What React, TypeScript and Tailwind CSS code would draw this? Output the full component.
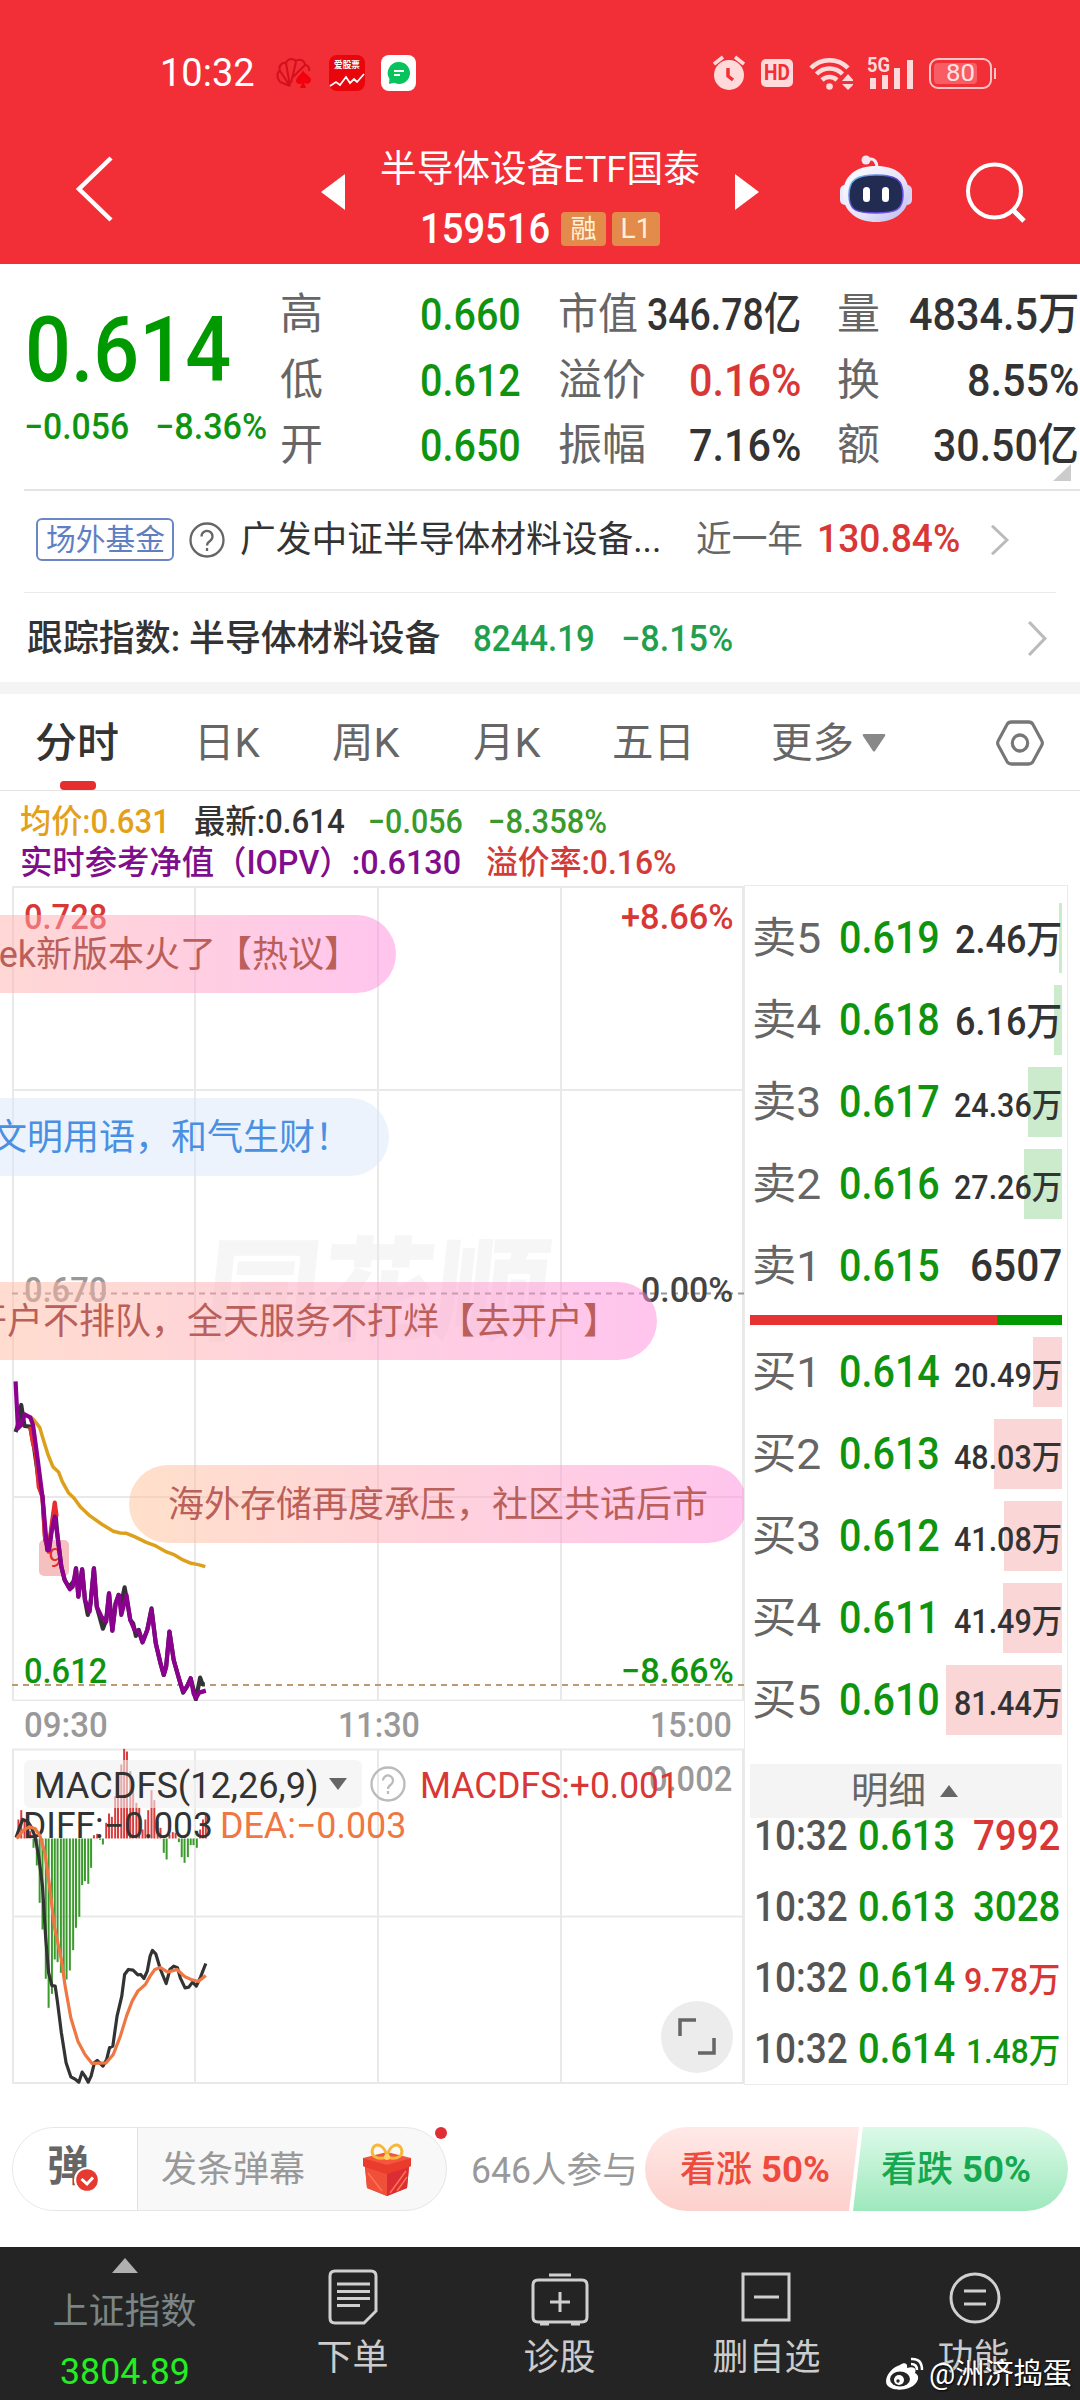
import { useLayoutEffect, useRef, useState } from "react";
import type { ReactNode } from "react";
import clsx from "clsx";

type FitProps = { w: number; className?: string; children: ReactNode };

// Condenses a run of text horizontally so that it fills exactly `w` pixels.
function Fit({ w, className, children }: FitProps) {
  const ref = useRef<HTMLSpanElement>(null);
  const [scale, setScale] = useState(1);

  useLayoutEffect(() => {
    if (ref.current && ref.current.offsetWidth > 0) setScale(w / ref.current.offsetWidth);
  }, [w, children]);

  return (
    <span className={clsx("inline-block shrink-0 leading-none", className)} style={{ width: w }}>
      <span ref={ref} className="inline-block origin-left whitespace-pre" style={{ transform: `scaleX(${scale})` }}>{children}</span>
    </span>
  );
}

type Level = { name: string; price: string; vol: string; volW: number; size: "lg" | "md" | "sm"; bar: number };

const SELLS: Level[] = [
  { name: "卖5", price: "0.619", vol: "2.46万", volW: 107, size: "md", bar: 3 },
  { name: "卖4", price: "0.618", vol: "6.16万", volW: 107, size: "md", bar: 8 },
  { name: "卖3", price: "0.617", vol: "24.36万", volW: 108, size: "sm", bar: 34 },
  { name: "卖2", price: "0.616", vol: "27.26万", volW: 108, size: "sm", bar: 38 },
  { name: "卖1", price: "0.615", vol: "6507", volW: 92, size: "lg", bar: 0 },
];

const BUYS: Level[] = [
  { name: "买1", price: "0.614", vol: "20.49万", volW: 108, size: "sm", bar: 29 },
  { name: "买2", price: "0.613", vol: "48.03万", volW: 108, size: "sm", bar: 68 },
  { name: "买3", price: "0.612", vol: "41.08万", volW: 108, size: "sm", bar: 58 },
  { name: "买4", price: "0.611", vol: "41.49万", volW: 108, size: "sm", bar: 59 },
  { name: "买5", price: "0.610", vol: "81.44万", volW: 108, size: "sm", bar: 116 },
];

const TICKS = [
  { price: "0.613", vol: "7992", w: 87, up: true, small: false },
  { price: "0.613", vol: "3028", w: 87, up: false, small: false },
  { price: "0.614", vol: "9.78万", w: 96, up: true, small: true },
  { price: "0.614", vol: "1.48万", w: 94, up: false, small: true },
];

const AVG_LINE = "64,200 72,210 84,232 92,270 102,315 112,350 124,366 132,395 145,428 157,445 170,470 190,497 215,522 240,544 255,549 268,550 285,560 310,577 330,588 350,604 370,615 385,628 405,640 420,644 435,650";
const IOPV_LINE = "33,94 38,235 45,225 52,193 64,202 70,225 80,330 90,440 100,600 104,600 110,540 116,500 122,560 130,650 137,690 148,718 154,710 161,655 166,740 174,658 180,750 190,785 199,655 205,770 215,800 225,815 231,730 238,842 245,760 252,735 257,795 268,735 276,810 285,840 294,845 302,877 312,840 321,780 330,880 340,940 347,975 352,950 359,845 368,930 380,990 388,1025 396,1010 404,985 410,1030 415,1045 422,1028 436,1022";
const PRICE_LINE = "33,246 38,225 45,165 52,228 64,230 72,290 84,410 90,440 96,570 103,600 116,470 122,560 130,650 137,690 146,712 158,690 161,655 166,740 174,658 180,750 186,795 192,760 199,655 205,770 218,836 225,810 231,730 238,842 245,760 251,735 257,760 264,712 270,760 276,810 282,820 288,858 294,840 302,877 312,840 321,775 330,880 340,940 347,975 352,950 359,845 368,930 380,990 388,1028 396,1010 404,985 415,1048 424,983 429,1003 434,1003";
const HOT_LINE = "64,230 70,280 76,310 82,410 90,440 95,560 103,605 109,530 116,458 120,500";

const DIFF_LINE = "34,294 42,262 48,240 58,245 66,262 74,290 82,350 90,440 97,600 103,700 110,738 117,740 122,790 130,880 140,970 150,1012 160,1020 167,1028 174,998 180,1010 187,1028 193,1010 200,970 206,963 218,980 226,960 232,925 239,920 248,830 258,770 264,705 272,690 282,692 292,706 298,705 305,717 312,695 318,650 323,633 330,643 340,690 352,732 360,690 368,680 376,685 382,715 392,745 400,743 408,728 416,740 425,712 436,672";
const DEA_LINE = "35,297 50,272 62,262 75,268 85,290 95,340 105,440 115,560 130,660 138,740 150,835 165,905 180,945 195,972 225,970 240,945 255,890 268,830 280,785 292,755 308,735 318,710 328,690 340,684 355,698 375,690 392,712 405,720 420,726 436,708";

// [x, y] pairs, every bar grows from the zero line at y = 297
const MACD_BARS: [number, number][] = [
  [39, 240], [45, 212], [52, 240], [58, 255], [64, 275], [71, 325], [78, 378], [84, 490], [90, 570], [97, 718],
  [103, 805], [110, 763], [116, 660], [122, 668], [129, 700], [135, 712], [141, 720], [148, 693], [155, 632], [161, 565],
  [168, 532], [174, 437], [180, 425], [187, 433], [193, 385], [199, 287], [206, 283], [212, 301], [218, 315], [225, 250],
  [231, 222], [237, 232], [244, 170], [250, 130], [257, 75], [263, 28], [269, 36], [276, 95], [282, 130], [289, 190],
  [295, 205], [302, 270], [308, 240], [314, 212], [321, 152], [327, 182], [334, 245], [340, 265], [347, 340], [353, 360],
  [359, 285], [366, 278], [372, 280], [379, 308], [385, 353], [391, 370], [398, 353], [404, 317], [410, 317], [417, 325],
  [424, 270], [430, 240], [436, 225],
];

function StatusBar() {
  return (
    <div className="mt-[45px] flex h-[56px] items-center pl-[160px] text-white">
      <Fit w={95} className="text-[38px]">10:32</Fit>
      <svg className="ml-[21px] h-[32px] w-[36px]" viewBox="0 0 36 32" fill="none" stroke="#d3101b" strokeWidth="2">
        <path d="M14 29 4 25C0 20 1 15 4 14 2 9 6 5 10 6c2-5 7-5 10-2 4-3 9 0 9 4 3 0 5 3 4 6M14 29 4 14M14 29 10 6M15 26 20 5M17 20 29 8" />
        <path d="M27 13c-1 4-7 7-7 11 0 3 4 4 6 2l-2 5h6l-2-5c3 2 7 0 7-3 0-4-7-6-8-10Z" fill="#f2000c" stroke="none" />
      </svg>
      <div className="ml-[17px] flex h-[36px] w-[36px] flex-col items-center rounded-[8px] bg-[#e8060c] pt-[6px]">
        <Fit w={26} className="text-[9px] font-bold">爱股票</Fit>
        <svg className="mt-[3px] h-[16px] w-[36px]" viewBox="0 0 36 16" fill="none" stroke="#fff" strokeWidth="1.8"><path d="m1 13 6-4 4 3 6-8 4 6 4-4 3 3 7-8" /></svg>
      </div>
      <div className="ml-[16px] flex h-[36px] w-[35px] items-center justify-center rounded-[8px] bg-white">
        <svg className="h-[24px] w-[24px]" viewBox="0 0 24 24"><path d="M12 1a11 11 0 1 1-5 20.800L2 23l.500-5A11 11 0 0 1 12 1Z" fill="#07c35c" /><path d="M7 10h10M7 14h6" stroke="#fff" strokeWidth="2" /></svg>
      </div>

      <svg className="ml-[297px] h-[36px] w-[32px]" viewBox="0 0 32 36" fill="none">
        <circle cx="16" cy="20" r="15" fill="#ffdadb" />
        <path d="m1 9 9-7M31 9l-9-7" stroke="#ffdadb" strokeWidth="3.500" />
        <path d="M15 13v8l5 4" stroke="#f22f37" strokeWidth="3.500" />
      </svg>
      <div className="ml-[16px] flex h-[28px] w-[32px] items-center justify-center rounded-[5px] bg-[#ffdadb] text-[#f22f37]"><Fit w={26} className="text-[22px] font-bold">HD</Fit></div>
      <svg className="ml-[16px] h-[36px] w-[44px]" viewBox="0 0 44 36" fill="none" stroke="#ffdadb" strokeWidth="4.500">
        <path d="M2 13a26 26 0 0 1 37 0M7.500 19a18 18 0 0 1 26 0M13 25a11 11 0 0 1 15 0" />
        <circle cx="20.500" cy="31.500" r="3.300" fill="#ffdadb" stroke="none" />
        <path d="m33 26 6-7 6 7ZM33 29l6 6 6-6Z" fill="#ffdadb" stroke="none" />
      </svg>
      <div className="relative ml-[14px] h-[34px] w-[46px] text-[#ffdadb]">
        <svg className="h-full w-full" viewBox="0 0 46 34" fill="#ffdadb"><path d="M3 22h6v11H3ZM15 19h6v14h-6ZM27 12h6v21h-6ZM40 4h6v29h-6Z" /></svg>
        <Fit w={23} className="absolute -top-[1px] left-0 text-[20px] font-bold">5G</Fit>
      </div>
      <div className="relative ml-[16px] flex h-[31px] w-[63px] items-center justify-center rounded-[9px] border-2 border-[#ffc4c6]">
        <div className="absolute top-[3px] left-[3px] h-[21px] w-[43px] rounded-[4px] bg-[#f75d63]" />
        <Fit w={29} className="relative text-[24px] text-[#ffe3e4]">80</Fit>
        <div className="absolute top-[8px] -right-[6px] h-[11px] w-[2px] bg-[#ffc4c6]" />
      </div>
    </div>
  );
}

function Robot() {
  return (
    <svg className="mt-[2px] ml-[79px] h-[68px] w-[76px]" viewBox="0 0 76 68">
      <defs>
        <linearGradient id="shell" x1="0" y1="0" x2="1" y2="1"><stop offset="0" stopColor="#fff" /><stop offset=".6" stopColor="#e4e2f8" /><stop offset="1" stopColor="#b9b8ee" /></linearGradient>
        <linearGradient id="rim" x1="0" y1="0" x2="1" y2="1"><stop offset="0" stopColor="#6fd6ee" /><stop offset=".5" stopColor="#5a3fd6" /><stop offset="1" stopColor="#7a5cf0" /></linearGradient>
      </defs>
      <path d="M29 5c7-3 10 2 10 8" fill="none" stroke="#efeafa" strokeWidth="3" />
      <circle cx="28" cy="5" r="4.500" fill="#f3e6f2" />
      <rect x="2" y="30" width="10" height="20" rx="5" fill="#ece9fb" /><rect x="64" y="30" width="10" height="20" rx="5" fill="#d5d2f3" />
      <path d="M38 11c20 0 33 10 33 28S56 67 38 67 5 57 5 39s13-28 33-28Z" fill="url(#shell)" />
      <path d="M38 20c20 0 27 5 27 20s-7 18-27 18-27-3-27-18 7-20 27-20Z" fill="#222c52" stroke="url(#rim)" strokeWidth="1.500" />
      <rect x="25" y="32" width="7" height="15" rx="3.500" fill="#fff" /><rect x="44" y="32" width="7" height="15" rx="3.500" fill="#fff" />
    </svg>
  );
}

function Header() {
  return (
    <header className="h-[264px] shrink-0 overflow-hidden bg-[#f22f37]">
      <StatusBar />
      <div className="mt-[22px] flex h-[130px] items-center text-white">
        <svg className="mt-[2px] ml-[74px] h-[68px] w-[40px]" viewBox="0 0 40 68" fill="none" stroke="#fff" strokeWidth="4.500"><path d="M37 3 5 34l32 31" /></svg>
        <svg className="mt-[8px] ml-[207px] h-[36px] w-[24px]" viewBox="0 0 24 36"><path d="M24 0v36L0 18Z" fill="#fff" /></svg>
        <div className="flex h-[130px] w-[390px] flex-col items-center pt-[21px]">
          <div className="flex h-[50px] items-center"><Fit w={320} className="text-[37px]">半导体设备ETF国泰</Fit></div>
          <div className="mt-[13px] flex h-[44px] items-center">
            <Fit w={130} className="text-[42px] font-medium">159516</Fit>
            <span className="ml-[11px] flex h-[34px] w-[45px] items-center justify-center rounded-[4px] bg-[#e28b4b] text-[26px] leading-none text-[#fff1d8]">融</span>
            <span className="ml-[6px] flex h-[34px] w-[48px] items-center justify-center rounded-[4px] bg-[#e28b4b] text-[28px] leading-none text-[#fff1d8]">L1</span>
          </div>
        </div>
        <svg className="mt-[8px] h-[36px] w-[24px]" viewBox="0 0 24 36"><path d="M0 0v36l24-18Z" fill="#fff" /></svg>
        <Robot />
        <svg className="mt-[7px] ml-[50px] h-[64px] w-[64px]" viewBox="0 0 64 64" fill="none" stroke="#fff" strokeWidth="4"><circle cx="30.500" cy="31" r="26.500" /><path d="m49 50 11 11" strokeWidth="5" /></svg>
      </div>
    </header>
  );
}

function Stat({ label, lw, value, vw, tone = "text-[#333]" }: { label: string; lw: number; value: string; vw: number; tone?: string }) {
  return (
    <div className="flex h-[65.5px] items-center justify-between">
      <Fit w={lw} className="text-[43px] text-[#666]">{label}</Fit>
      <Fit w={vw} className={clsx("text-[45px] font-medium", tone)}>{value}</Fit>
    </div>
  );
}

function Quote() {
  const green = "text-[#0f9410]";
  return (
    <section className="flex h-[225px] shrink-0 pt-[18px]">
      <div className="w-[280px] pt-[18px]">
        <div className="flex h-[100px] items-center pl-[25px]"><Fit w={206} className="text-[91px] font-medium text-[#009900]">0.614</Fit></div>
        <div className="mt-[7px] flex h-[40px] items-center pl-[24px] text-[#0f9410]">
          <Fit w={105} className="text-[36px] font-medium">−0.056</Fit>
          <Fit w={112} className="ml-[26px] text-[36px] font-medium">−8.36%</Fit>
        </div>
      </div>
      <div className="w-[241px]">
        <Stat label="高" lw={43} value="0.660" vw={101} tone={green} />
        <Stat label="低" lw={43} value="0.612" vw={101} tone={green} />
        <Stat label="开" lw={43} value="0.650" vw={101} tone={green} />
      </div>
      <div className="ml-[37px] w-[243px]">
        <Stat label="市值" lw={80} value="346.78亿" vw={154} />
        <Stat label="溢价" lw={88} value="0.16%" vw={112} tone="text-[#d93636]" />
        <Stat label="振幅" lw={88} value="7.16%" vw={112} />
      </div>
      <div className="relative ml-[36px] w-[242px]">
        <Stat label="量" lw={43} value="4834.5万" vw={170} />
        <Stat label="换" lw={43} value="8.55%" vw={112} />
        <Stat label="额" lw={43} value="30.50亿" vw={146} />
        <svg className="absolute right-[8px] bottom-[8px] h-[17px] w-[18px]" viewBox="0 0 18 17"><path d="M18 0v17H0Z" fill="#ccc" /></svg>
      </div>
    </section>
  );
}

function Chevron({ className }: { className: string }) {
  return <svg className={className} viewBox="0 0 20 36" preserveAspectRatio="none" fill="none" stroke="#bbb" strokeWidth="3"><path d="m2 2 15 16L2 34" /></svg>;
}

function FundRows() {
  return (
    <>
      <div className="ml-[24px] h-[2px] shrink-0 bg-[#e4e4e4]" />
      <div className="flex h-[101px] shrink-0 items-center pb-[4px] pl-[36px]">
        <span className="flex h-[43px] w-[138px] items-center justify-center rounded-[6px] border-2 border-[#6a86c4] text-[#5f7fc4]"><Fit w={119} className="text-[30px]">场外基金</Fit></span>
        <svg className="ml-[15px] h-[36px] w-[36px]" viewBox="0 0 36 36" fill="none" stroke="#666" strokeWidth="2.300"><circle cx="18" cy="18" r="16.500" /><path d="M12.500 14.500a5.500 5.500 0 1 1 8.500 4.500c-2 1.400-3 2.200-3 4.500M18 26v3" /></svg>
        <Fit w={421} className="ml-[15px] text-[36px] text-[#333]">广发中证半导体材料设备...</Fit>
        <Fit w={107} className="ml-[35px] text-[36px] text-[#666]">近一年</Fit>
        <Fit w={143} className="ml-[14px] text-[39px] font-medium text-[#d93636]">130.84%</Fit>
        <Chevron className="ml-[30px] h-[32px] w-[20px]" />
      </div>
      <div className="mx-[24px] h-px shrink-0 bg-[#eaeaea]" />
      <div className="flex h-[89px] shrink-0 items-center pt-[2px] pl-[27px]">
        <Fit w={413} className="text-[36px] font-medium text-[#333]">跟踪指数: 半导体材料设备</Fit>
        <Fit w={122} className="ml-[33px] text-[36px] font-medium text-[#1fa04f]">8244.19</Fit>
        <Fit w={112} className="ml-[26px] text-[36px] font-medium text-[#1fa04f]">−8.15%</Fit>
        <Chevron className="ml-[294px] h-[37px] w-[21px]" />
      </div>
      <div className="h-[12px] shrink-0 bg-[#f4f4f4]" />
    </>
  );
}

function Tabs() {
  return (
    <nav className="relative flex h-[97px] shrink-0 items-center border-b border-[#e4e4e4] pt-[2px] pl-[35px] text-[#666]">
      <div className="w-[159px]"><Fit w={84} className="text-[41px] font-medium text-[#333]">分时</Fit></div>
      <div className="w-[138px]"><Fit w={66} className="text-[41px]">日K</Fit></div>
      <div className="w-[141px]"><Fit w={68} className="text-[41px]">周K</Fit></div>
      <div className="w-[139px]"><Fit w={68} className="text-[41px]">月K</Fit></div>
      <div className="w-[159px]"><Fit w={83} className="text-[41px]">五日</Fit></div>
      <Fit w={83} className="text-[41px]">更多</Fit>
      <svg className="ml-[8px] h-[18px] w-[24px]" viewBox="0 0 24 18"><path d="M2 0h20q2 0 1 2L13 17q-1 1-2 0L1 2Q0 0 2 0Z" fill="#888" /></svg>
      <svg className="ml-[109px] h-[48px] w-[50px]" viewBox="0 0 52 48" preserveAspectRatio="none" fill="none" stroke="#777" strokeWidth="3.300"><path d="M17 3h18q3 0 4.500 2.500l9 16q1.500 2.500 0 5l-9 16Q38 45 35 45H17q-3 0-4.500-2.500l-9-16q-1.500-2.500 0-5l9-16Q14 3 17 3Z" /><circle cx="26" cy="24" r="8" /></svg>
      <div className="absolute bottom-0 left-[60px] h-[9px] w-[36px] rounded-[4px] bg-[#e62e2e]" />
    </nav>
  );
}

function Legend() {
  return (
    <div className="h-[94px] shrink-0 pt-[10px] pl-[20px] text-[33px] font-medium">
      <div className="flex h-[41px] items-center">
        <Fit w={150} className="text-[#e3a01b]">均价:0.631</Fit>
        <Fit w={151} className="ml-[24px] text-[#333]">最新:0.614</Fit>
        <Fit w={95} className="ml-[23px] text-[#3a9a2c]">−0.056</Fit>
        <Fit w={119} className="ml-[25px] text-[#3a9a2c]">−8.358%</Fit>
      </div>
      <div className="flex h-[41px] items-center">
        <Fit w={441} className="text-[#800d8c]">实时参考净值（IOPV）:0.6130</Fit>
        <Fit w={190} className="ml-[25px] text-[#d23c38]">溢价率:0.16%</Fit>
      </div>
    </div>
  );
}

const pill = "absolute flex h-[78px] items-center pt-[2px] whitespace-nowrap text-[36px] leading-none";

function PriceChart() {
  return (
    <div className="relative h-[817px] w-[744px] overflow-hidden">
      <Fit w={344} className="absolute top-[352px] left-[206px] -skew-x-6 text-[112px] font-black text-[#f6f6f6]">同花顺</Fit>
      <svg className="absolute inset-0 h-[817px] w-[744px]" viewBox="0 0 744 817" fill="none">
        <path d="M12 2H744M12 205H744M12 612H744M12 815.500H744M13 2V815M195 2V815M378 2V815M561 2V815M743 2V815" stroke="#e9e9e9" strokeWidth="2" />
        <path d="M12 408.500H744" stroke="#999" strokeWidth="2" strokeDasharray="6 5" />
        <path d="M12 800H744" stroke="#bd9b70" strokeWidth="2" strokeDasharray="6 5" />
      </svg>
      <Fit w={83} className="absolute top-[15px] left-[24px] text-[35px] font-medium text-[#d93636]">0.728</Fit>
      <Fit w={113} className="absolute top-[15px] left-[621px] text-[35px] font-medium text-[#d93636]">+8.66%</Fit>
      <Fit w={83} className="absolute top-[388px] left-[24px] text-[35px] font-medium text-[#999]">0.670</Fit>
      <Fit w={92} className="absolute top-[388px] left-[641px] text-[35px] font-medium text-[#444]">0.00%</Fit>
      <Fit w={83} className="absolute top-[769px] left-[24px] text-[35px] font-medium text-[#0f9410]">0.612</Fit>
      <Fit w={113} className="absolute top-[769px] left-[621px] text-[35px] font-medium text-[#0f9410]">−8.66%</Fit>

      <div className="absolute top-[655px] left-[39px] flex h-[36px] w-[30px] items-center justify-center rounded-[5px] bg-[#f6c0c0] pl-[3px] text-[25px] leading-none text-[#e62e2e]">9</div>
      <svg className="absolute inset-0 h-[817px] w-[744px]" viewBox="0 0 744 817" fill="none" strokeLinejoin="round">
        <g transform="translate(0 465) scale(.472 .3333)" strokeWidth="4.200">
          <polyline points={AVG_LINE} stroke="#dda01c" strokeWidth="3.500" vectorEffect="non-scaling-stroke" />
          <polyline points={PRICE_LINE} stroke="#333" vectorEffect="non-scaling-stroke" />
          <polyline points={HOT_LINE} stroke="#e62e2e" vectorEffect="non-scaling-stroke" />
          <polyline points={IOPV_LINE} stroke="#8b008f" vectorEffect="non-scaling-stroke" />
        </g>
      </svg>

      <div className={clsx(pill, "top-[30px] right-[348px] w-[560px] justify-end rounded-full bg-linear-to-r from-[#ffc195]/50 via-[#ffa5b9]/50 to-[#ff8bdd]/50 pr-[36px] text-[#bb5f5a]")}>ek新版本火了【热议】</div>
      <div className={clsx(pill, "top-[213px] right-[355px] w-[480px] justify-end rounded-full bg-[#d9e7fb]/50 pr-[38px] text-[#4a90e2]")}>文明用语，和气生财！</div>
      <div className={clsx(pill, "top-[397px] right-[87px] w-[750px] justify-end rounded-full bg-linear-to-r from-[#ffc195]/50 via-[#ffa5b9]/50 to-[#ff8bdd]/50 pr-[38px] text-[#bb5f5a]")}>开户不排队，全天服务不打烊【去开户】</div>
      <div className={clsx(pill, "top-[580px] left-[129px] w-[618px] rounded-full bg-linear-to-r from-[#ffc195]/50 via-[#ffa5b9]/50 to-[#ff8bdd]/50 pl-[39px] text-[#bb5f5a]")}>海外存储再度承压，社区共话后市</div>
    </div>
  );
}

function MacdChart() {
  return (
    <div className="relative h-[337px] w-[744px] overflow-hidden">
      <svg className="absolute inset-0 h-[337px] w-[744px]" viewBox="0 0 744 337" fill="none" strokeLinejoin="round">
        <path d="M12 1.500H744M12 168.500H744M12 335H744M13 1V336M195 1V336M378 1V336M561 1V336M743 1V336" stroke="#e9e9e9" strokeWidth="2" />
        <g transform="translate(0 -8.5) scale(.472 .3333)">
          {MACD_BARS.map(([x, y]) => (
            <path key={x} d={`M${x} 297V${y}`} stroke={y < 297 ? "#d93c3c" : "#3a9a2c"} strokeWidth="2" vectorEffect="non-scaling-stroke" />
          ))}
        </g>
      </svg>
      <div className="absolute top-[12px] left-[24px] flex h-[48px] w-[338px] items-center rounded-[6px] bg-[#f0f0f0]/60 pt-[3px] pl-[10px]">
        <Fit w={285} className="text-[36px] text-[#333]">MACDFS(12,26,9)</Fit>
        <svg className="-mt-[3px] ml-[10px] h-[12px] w-[18px]" viewBox="0 0 18 12"><path d="M0 0h18L9 12Z" fill="#666" /></svg>
      </div>
      <svg className="absolute top-[18px] left-[370px] h-[36px] w-[36px]" viewBox="0 0 36 36" fill="none" stroke="#bbb" strokeWidth="2.300"><circle cx="18" cy="18" r="16.500" /><path d="M13 14.500a5 5 0 1 1 8 4c-2 1.400-3 2.200-3 4.500M18 25v3" /></svg>
      <Fit w={83} className="absolute top-[14px] left-[649px] text-[35px] font-medium text-[#999]">0.002</Fit>
      <Fit w={259} className="absolute top-[20px] left-[420px] text-[36px] text-[#d93636]">MACDFS:+0.001</Fit>
      <Fit w={190} className="absolute top-[60px] left-[23px] text-[36px] text-[#333]">DIFF:−0.003</Fit>
      <Fit w={186} className="absolute top-[60px] left-[220px] text-[36px] text-[#ee7744]">DEA:−0.003</Fit>
      <svg className="absolute inset-0 h-[337px] w-[744px]" viewBox="0 0 744 337" fill="none" strokeLinejoin="round">
        <g transform="translate(0 -8.5) scale(.472 .3333)" strokeWidth="3.200">
          <polyline points={DIFF_LINE} stroke="#333" vectorEffect="non-scaling-stroke" />
          <polyline points={DEA_LINE} stroke="#ee7744" vectorEffect="non-scaling-stroke" />
        </g>
      </svg>
      <div className="absolute top-[253px] left-[661px] flex h-[72px] w-[72px] items-center justify-center rounded-full bg-[#ececec]">
        <svg className="h-[38px] w-[38px]" viewBox="0 0 38 38" fill="none" stroke="#666" strokeWidth="3.500"><path d="M2 18V2h16M36 20v15H20" /></svg>
      </div>
    </div>
  );
}

function Book({ rows, barClass }: { rows: Level[]; barClass: string }) {
  return (
    <div className="flex flex-col gap-[12px]">
      {rows.map((r) => (
        <div key={r.name} className="relative h-[70px]">
          <div className={clsx("absolute top-0 right-0 h-full", barClass)} style={{ width: r.bar }} />
          <div className="relative flex items-baseline pt-[12px] pl-[2px]">
            <Fit w={69} className="text-[43px] text-[#666]">{r.name}</Fit>
            <Fit w={101} className="ml-[18px] text-[45px] font-medium text-[#0f9410]">{r.price}</Fit>
            <span className="grow" />
            <Fit w={r.volW} className={clsx("font-medium text-[#333]", r.size === "lg" && "text-[45px]", r.size === "md" && "text-[39px]", r.size === "sm" && "text-[33px]")}>{r.vol}</Fit>
          </div>
        </div>
      ))}
    </div>
  );
}

function SidePanel() {
  return (
    <aside className="flex h-[1200px] w-[324px] flex-col border border-[#ebebeb] pt-[17px] pr-[5px] pl-[5px]">
      <Book rows={SELLS} barClass="bg-[#cceacc]" />
      <div className="mt-[14px] flex h-[10px] shrink-0"><div className="w-[247px] bg-[#e63232]" /><div className="grow bg-[#009900]" /></div>
      <div className="mt-[12px]"><Book rows={BUYS} barClass="bg-[#fad6d6]" /></div>
      <div className="mt-[29px] flex h-[54px] shrink-0 items-center justify-center bg-[#f4f4f4] pr-[4px]">
        <Fit w={75} className="text-[37px] text-[#666]">明细</Fit>
        <svg className="ml-[14px] h-[12px] w-[18px]" viewBox="0 0 18 12"><path d="M0 12h18L9 0Z" fill="#666" /></svg>
      </div>
      <div className="mt-[2px] h-[262px] overflow-hidden">
        <div className="-mt-[20px]">
          {TICKS.map((t, i) => (
            <div key={i} className="flex h-[71px] items-center pr-[2px] pl-[4px] font-medium">
              <Fit w={94} className="text-[42px] text-[#555]">10:32</Fit>
              <Fit w={97} className="ml-[10px] text-[42px] text-[#0f9410]">{t.price}</Fit>
              <span className="grow" />
              <Fit w={t.w} className={clsx(t.small ? "pt-[5px] text-[34px]" : "text-[42px]", t.up ? "text-[#d93636]" : "text-[#0f9410]")}>{t.vol}</Fit>
            </div>
          ))}
        </div>
      </div>
    </aside>
  );
}

function Gift() {
  return (
    <svg className="h-[54px] w-[50px]" viewBox="0 0 50 54">
      <path d="M1 15 25 22 49 15v8L47 24 45 45 25 53 5 45 3 24 1 23Z" fill="#e83a2c" />
      <path d="M3 24 25 31v22L5 45Z" fill="#f0503a" /><path d="M25 31 47 24 45 45 25 53Z" fill="#dc2c34" />
      <path d="M1 15 25 9 49 15 25 23Z" fill="#f4553c" /><path d="M1 15 25 22 49 15v8L25 31 1 23Z" fill="#e93c2d" />
      <path d="m28 50 16-22M35 48l10-14M6 30l14 18" stroke="#ff7350" strokeWidth="1.500" />
      <path d="M25 14C14 18 8 12 11 5c3-6 12-3 14 9ZM25 14c11 4 17-2 14-9-3-6-12-3-14 9Z" fill="none" stroke="#f5b83a" strokeWidth="3" />
      <circle cx="25" cy="14" r="3" fill="#ffd36a" />
    </svg>
  );
}

function DanmuBar() {
  return (
    <section className="flex h-[162px] shrink-0 items-start pt-[42px]">
      <div className="relative ml-[12px] flex h-[84px] w-[435px] rounded-full border border-[#e6e6e6] bg-[#f8f8f8]">
        <div className="relative flex w-[125px] items-center rounded-l-full border-r border-[#e2e2e2] bg-white pb-[4px] pl-[34px]">
          <span className="text-[42px] leading-none font-bold text-[#666]">弹</span>
          <svg className="absolute top-[39px] left-[61px] h-[26px] w-[26px]" viewBox="0 0 26 26"><circle cx="13" cy="13" r="13" fill="#fff" /><circle cx="13" cy="13" r="10.800" fill="#e63a30" /><path d="m7.500 12 5.500 5 6-6.500" fill="none" stroke="#fff" strokeWidth="3" /></svg>
        </div>
        <div className="flex grow items-center pt-[2px] pr-[34px] pl-[23px]">
          <Fit w={144} className="text-[36px] text-[#999]">发条弹幕</Fit>
          <span className="grow" />
          <Gift />
        </div>
        <div className="absolute -top-[1px] -right-[1px] h-[12px] w-[12px] rounded-full bg-[#e02e34]" />
      </div>
      <div className="ml-[24px] flex h-[84px] items-center pt-[3px]"><Fit w={167} className="text-[36px] text-[#999]">646人参与</Fit></div>
      <div className="ml-[7px] flex h-[84px] w-[423px]">
        <div className="flex w-[216px] items-center rounded-l-full bg-linear-to-b from-[#ffe9e7] to-[#fcd0cb] pt-[2px] pl-[35px] [clip-path:polygon(0_0,214px_0,204px_100%,0_100%)]">
          <Fit w={72} className="text-[36px] font-medium text-[#ee4a3e]">看涨</Fit>
          <Fit w={69} className="ml-[9px] text-[36px] font-bold text-[#ee4a3e]">50%</Fit>
        </div>
        <div className="-ml-[9px] flex w-[216px] items-center rounded-r-full bg-linear-to-b from-[#dcfae8] to-[#9de8bd] pt-[2px] pl-[29px] [clip-path:polygon(11px_0,100%_0,100%_100%,1px_100%)]">
          <Fit w={72} className="text-[36px] font-medium text-[#14a850]">看跌</Fit>
          <Fit w={69} className="ml-[9px] text-[36px] font-bold text-[#14a850]">50%</Fit>
        </div>
      </div>
    </section>
  );
}

function NavItem({ label, w, children }: { label: string; w: number; children: ReactNode }) {
  return (
    <div className="flex w-[207px] flex-col items-center pt-[20px]">
      <svg className="h-[60px] w-[60px]" viewBox="0 0 60 60" fill="none" stroke="#d0d0d0" strokeWidth="3">{children}</svg>
      <div className="mt-[11px] flex h-[40px] items-center"><Fit w={w} className="text-[36px] text-[#ccc]">{label}</Fit></div>
    </div>
  );
}

function BottomNav() {
  return (
    <footer className="relative flex h-[153px] shrink-0 bg-[#242424]">
      <div className="flex w-[249px] flex-col items-center pt-[11px]">
        <svg className="h-[15px] w-[26px]" viewBox="0 0 26 15"><path d="M0 15h26L13 0Z" fill="#b0b0b0" /></svg>
        <div className="mt-[19px] flex h-[40px] items-center"><Fit w={144} className="text-[36px] text-[#7c8585]">上证指数</Fit></div>
        <div className="mt-[20px] flex h-[40px] items-center"><Fit w={130} className="text-[36px] text-[#22ee22]">3804.89</Fit></div>
      </div>
      <NavItem label="下单" w={72}>
        <path d="M12 4h36q5 0 5 5v35L41 56H12q-5 0-5-5V9q0-5 5-5ZM14 17h33M14 24.500h33M14 31.500h33M14 38.500h23" />
      </NavItem>
      <NavItem label="诊股" w={72}>
        <path d="M8 13h44q5 0 5 5v32q0 5-5 5H8q-5 0-5-5V18q0-5 5-5ZM19 8h22M30 25v20M20 35h20M10 57h9M41 57h9" />
      </NavItem>
      <NavItem label="删自选" w={108}>
        <path d="M6 7h46v46H6ZM17 30h25" />
      </NavItem>
      <NavItem label="功能" w={72}>
        <circle cx="31" cy="31" r="24" /><path d="M20 24h22M20 37h22" />
      </NavItem>
      <div className="absolute top-[110px] left-[884px] flex items-center text-white">
        <svg className="h-[34px] w-[40px]" viewBox="0 0 40 34" fill="none">
          <path d="M16 8c4-3 8-2 7 3 6-2 10 0 8 5 4 2 4 6 1 10-6 8-24 9-29 2C-1 21 8 10 16 8Z" fill="#fff" />
          <ellipse cx="16" cy="22" rx="10" ry="7.500" fill="#242424" /><circle cx="15" cy="23" r="5" fill="#fff" /><circle cx="14" cy="24" r="1.700" fill="#242424" />
          <path d="M27 7q6 0 6 6M27 2q11-1 11 11" stroke="#fff" strokeWidth="2.500" />
        </svg>
        <Fit w={143} className="ml-[5px] text-[29px] [text-shadow:1px_1px_2px_#000]">@洲济捣蛋</Fit>
      </div>
    </footer>
  );
}

export default function App() {
  return (
    <main className="flex h-[2400px] w-[1080px] flex-col overflow-hidden bg-white font-[Roboto,'Noto_Sans_CJK_SC',sans-serif]">
      <Header />
      <Quote />
      <FundRows />
      <Tabs />
      <Legend />
      <div className="flex h-[1200px] shrink-0">
        <div className="flex w-[744px] flex-col">
          <PriceChart />
          <div className="flex h-[47px] items-center pt-[2px] pl-[24px] text-[35px] text-[#999]">
            <Fit w={84} className="font-medium">09:30</Fit>
            <Fit w={82} className="ml-[230px] font-medium">11:30</Fit>
            <Fit w={82} className="ml-[230px] font-medium">15:00</Fit>
          </div>
          <MacdChart />
        </div>
        <SidePanel />
      </div>
      <DanmuBar />
      <BottomNav />
    </main>
  );
}
